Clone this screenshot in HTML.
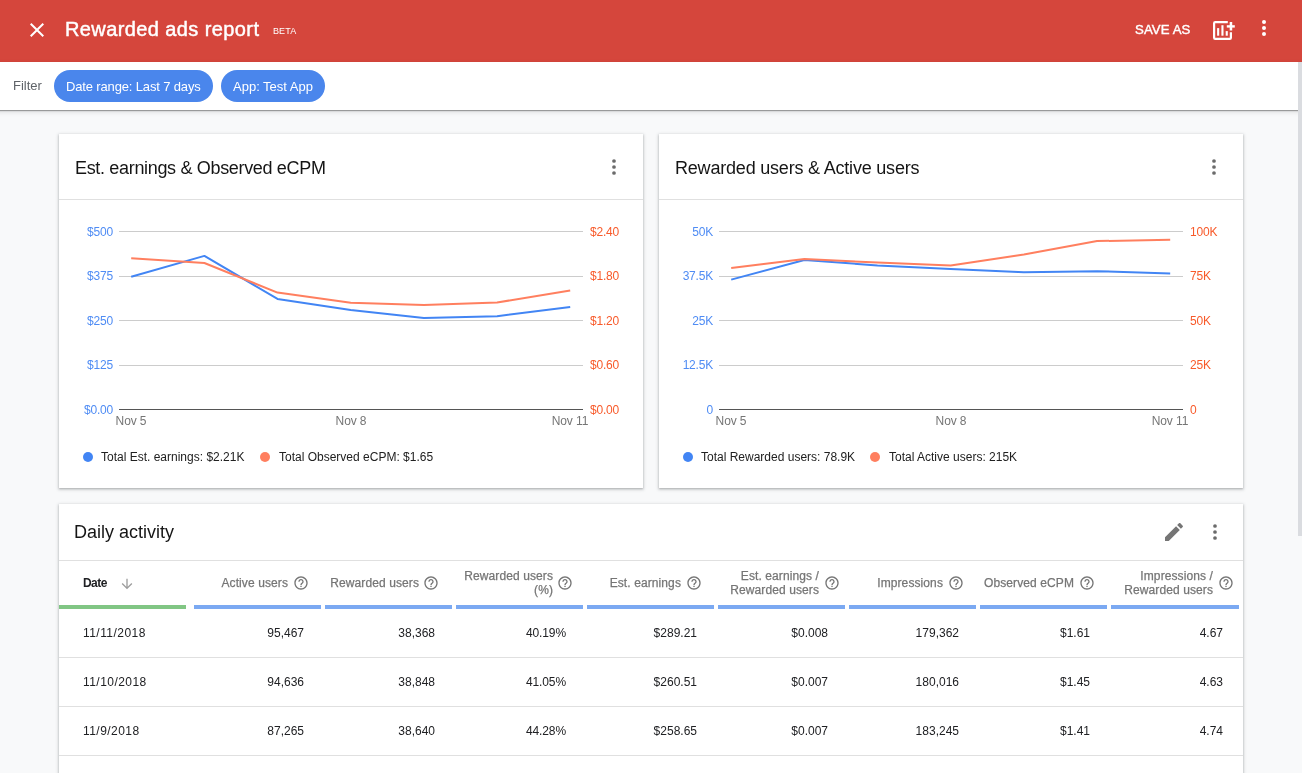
<!DOCTYPE html>
<html><head><meta charset="utf-8"><title>Rewarded ads report</title>
<style>
html,body{-webkit-font-smoothing:antialiased;margin:0;padding:0;width:1302px;height:773px;overflow:hidden;background:#f8f9fa;font-family:"Liberation Sans",sans-serif;}
.a{position:absolute;}
.t{position:absolute;white-space:nowrap;will-change:transform;}
.card{background:#fff;box-shadow:0 1px 2px rgba(60,64,67,.30),0 1px 3px 1px rgba(60,64,67,.15);}
</style></head><body>
<div class="a" style="left:0;top:0;width:1302px;height:62px;background:#d5463c"></div>
<svg class="a" style="left:25px;top:18px" width="24" height="24" viewBox="0 0 24 24"><path fill="#fff" d="M19 6.41L17.59 5 12 10.59 6.41 5 5 6.41 10.59 12 5 17.59 6.41 19 12 13.41 17.59 19 19 17.59 13.41 12z"/></svg>
<div class="t" style="top:17.07px;font-size:20px;line-height:24px;color:#fff;letter-spacing:0.4px;left:64.8px;-webkit-text-stroke:0.45px #fff;">Rewarded ads report</div>
<div class="t" style="top:26.18px;font-size:9px;line-height:11px;color:#fff;letter-spacing:0.1px;left:272.8px;">BETA</div>
<div class="t" style="top:22.13px;font-size:13.2px;line-height:16px;color:#fff;letter-spacing:0.1px;left:1135.2px;-webkit-text-stroke:0.4px #fff;">SAVE AS</div>
<svg class="a" style="left:1210px;top:18px" width="28" height="26" viewBox="0 0 28 26"><path d="M17.8 4.1 H5.2 Q4.1 4.1 4.1 5.2 V19.8 Q4.1 20.9 5.2 20.9 H19.8 Q20.9 20.9 20.9 19.8 V14.2" fill="none" stroke="#fff" stroke-width="2.2"/><rect x="7.1" y="10.1" width="2.1" height="7.6" fill="#fff"/><rect x="11.4" y="7.2" width="2.1" height="10.5" fill="#fff"/><rect x="15.7" y="13.1" width="2.1" height="4.6" fill="#fff"/><rect x="16.8" y="7.2" width="8" height="2.4" fill="#fff"/><rect x="19.7" y="4" width="2.5" height="8.5" fill="#fff"/></svg>
<svg class="a" style="left:1252px;top:16px" width="24" height="24" viewBox="0 0 24 24"><circle cx="12" cy="6" r="2" fill="#fff"/><circle cx="12" cy="12" r="2" fill="#fff"/><circle cx="12" cy="18" r="2" fill="#fff"/></svg>
<div class="a" style="left:-20px;top:62px;width:1342px;height:48px;background:#fff;box-shadow:0 1px 1px rgba(0,0,0,.32),0 2px 5px rgba(0,0,0,.12)"></div>
<div class="t" style="top:77.80px;font-size:13px;line-height:16px;color:#5f6368;left:12.9px;">Filter</div>
<div class="a" style="left:54px;top:70px;width:159px;height:32px;border-radius:16px;background:#4a86ec"></div>
<div class="t" style="top:78.60px;font-size:13px;line-height:16px;color:#fff;letter-spacing:-0.15px;left:66.3px;">Date range: Last 7 days</div>
<div class="a" style="left:221px;top:70px;width:104px;height:32px;border-radius:16px;background:#4a86ec"></div>
<div class="t" style="top:78.60px;font-size:13px;line-height:16px;color:#fff;left:233.1px;">App: Test App</div>
<div class="a card" style="left:59px;top:134px;width:584px;height:354px"></div>
<div class="a card" style="left:659px;top:134px;width:584px;height:354px"></div>
<div class="a card" style="left:59px;top:504px;width:1184px;height:400px"></div>
<div class="t" style="top:156.76px;font-size:18px;line-height:22px;color:#151515;letter-spacing:-0.33px;left:74.8px;">Est. earnings &amp; Observed eCPM</div>
<div class="a" style="left:59px;top:199px;width:584px;height:1px;background:#e0e0e0"></div>
<svg class="a" style="left:602.4px;top:155px" width="24" height="24" viewBox="0 0 24 24"><circle cx="12" cy="6" r="1.85" fill="#6b6b6b"/><circle cx="12" cy="12" r="1.85" fill="#6b6b6b"/><circle cx="12" cy="18" r="1.85" fill="#6b6b6b"/></svg>
<svg class="a" style="left:0px;top:0" width="660" height="500"><rect x="119" y="231" width="464" height="1" fill="#ccc"/><rect x="119" y="276" width="464" height="1" fill="#ccc"/><rect x="119" y="320" width="464" height="1" fill="#ccc"/><rect x="119" y="365" width="464" height="1" fill="#ccc"/><rect x="119" y="409" width="464" height="1" fill="#555"/><polyline points="131.2,276.7 204.4,255.9 277.5,298.9 350.7,309.9 423.9,317.9 497.1,316.2 570.2,306.9" fill="none" stroke="#4285f4" stroke-width="2" stroke-linejoin="round"/><polyline points="131.2,258.3 204.4,263.0 277.5,292.6 350.7,302.7 423.9,305.0 497.1,302.5 570.2,290.4" fill="none" stroke="#ff7f5f" stroke-width="2" stroke-linejoin="round"/></svg>
<div class="t" style="top:224.64px;font-size:12px;line-height:14px;color:#4f8cf4;letter-spacing:-0.2px;left:-887.4px;width:1000px;text-align:right;">$500</div>
<div class="t" style="top:268.64px;font-size:12px;line-height:14px;color:#4f8cf4;letter-spacing:-0.2px;left:-887.4px;width:1000px;text-align:right;">$375</div>
<div class="t" style="top:313.64px;font-size:12px;line-height:14px;color:#4f8cf4;letter-spacing:-0.2px;left:-887.4px;width:1000px;text-align:right;">$250</div>
<div class="t" style="top:357.64px;font-size:12px;line-height:14px;color:#4f8cf4;letter-spacing:-0.2px;left:-887.4px;width:1000px;text-align:right;">$125</div>
<div class="t" style="top:402.64px;font-size:12px;line-height:14px;color:#4f8cf4;letter-spacing:-0.2px;left:-887.4px;width:1000px;text-align:right;">$0.00</div>
<div class="t" style="top:224.64px;font-size:12px;line-height:14px;color:#f85a2a;letter-spacing:-0.2px;left:589.5px;">$2.40</div>
<div class="t" style="top:268.64px;font-size:12px;line-height:14px;color:#f85a2a;letter-spacing:-0.2px;left:589.5px;">$1.80</div>
<div class="t" style="top:313.64px;font-size:12px;line-height:14px;color:#f85a2a;letter-spacing:-0.2px;left:589.5px;">$1.20</div>
<div class="t" style="top:357.64px;font-size:12px;line-height:14px;color:#f85a2a;letter-spacing:-0.2px;left:589.5px;">$0.60</div>
<div class="t" style="top:402.64px;font-size:12px;line-height:14px;color:#f85a2a;letter-spacing:-0.2px;left:589.5px;">$0.00</div>
<div class="t" style="top:413.74px;font-size:12px;line-height:14px;color:#757575;letter-spacing:-0.1px;left:-368.8px;width:1000px;text-align:center;">Nov 5</div>
<div class="t" style="top:413.74px;font-size:12px;line-height:14px;color:#757575;letter-spacing:-0.1px;left:-149.29000000000002px;width:1000px;text-align:center;">Nov 8</div>
<div class="t" style="top:413.74px;font-size:12px;line-height:14px;color:#757575;letter-spacing:-0.1px;left:70.22000000000003px;width:1000px;text-align:center;">Nov 11</div>
<div class="a" style="left:83px;top:452px;width:10px;height:10px;border-radius:50%;background:#4285f4"></div>
<div class="t" style="top:449.64px;font-size:12px;line-height:14px;color:#212121;left:101.3px;">Total Est. earnings: $2.21K</div>
<div class="a" style="left:260px;top:452px;width:10px;height:10px;border-radius:50%;background:#ff7f5f"></div>
<div class="t" style="top:449.64px;font-size:12px;line-height:14px;color:#212121;left:278.5px;">Total Observed eCPM: $1.65</div>
<div class="t" style="top:156.76px;font-size:18px;line-height:22px;color:#151515;letter-spacing:-0.2px;left:674.8px;">Rewarded users &amp; Active users</div>
<div class="a" style="left:659px;top:199px;width:584px;height:1px;background:#e0e0e0"></div>
<svg class="a" style="left:1202.4px;top:155px" width="24" height="24" viewBox="0 0 24 24"><circle cx="12" cy="6" r="1.85" fill="#6b6b6b"/><circle cx="12" cy="12" r="1.85" fill="#6b6b6b"/><circle cx="12" cy="18" r="1.85" fill="#6b6b6b"/></svg>
<svg class="a" style="left:600px;top:0" width="660" height="500"><rect x="119" y="231" width="464" height="1" fill="#ccc"/><rect x="119" y="276" width="464" height="1" fill="#ccc"/><rect x="119" y="320" width="464" height="1" fill="#ccc"/><rect x="119" y="365" width="464" height="1" fill="#ccc"/><rect x="119" y="409" width="464" height="1" fill="#555"/><polyline points="131.2,279.6 204.4,260.0 277.5,265.4 350.7,269.1 423.9,272.3 497.1,271.2 570.2,273.4" fill="none" stroke="#4285f4" stroke-width="2" stroke-linejoin="round"/><polyline points="131.2,267.9 204.4,258.9 277.5,262.6 350.7,265.4 423.9,254.5 497.1,241.1 570.2,239.8" fill="none" stroke="#ff7f5f" stroke-width="2" stroke-linejoin="round"/></svg>
<div class="t" style="top:224.64px;font-size:12px;line-height:14px;color:#4f8cf4;letter-spacing:-0.2px;left:-287.4px;width:1000px;text-align:right;">50K</div>
<div class="t" style="top:268.64px;font-size:12px;line-height:14px;color:#4f8cf4;letter-spacing:-0.2px;left:-287.4px;width:1000px;text-align:right;">37.5K</div>
<div class="t" style="top:313.64px;font-size:12px;line-height:14px;color:#4f8cf4;letter-spacing:-0.2px;left:-287.4px;width:1000px;text-align:right;">25K</div>
<div class="t" style="top:357.64px;font-size:12px;line-height:14px;color:#4f8cf4;letter-spacing:-0.2px;left:-287.4px;width:1000px;text-align:right;">12.5K</div>
<div class="t" style="top:402.64px;font-size:12px;line-height:14px;color:#4f8cf4;letter-spacing:-0.2px;left:-287.4px;width:1000px;text-align:right;">0</div>
<div class="t" style="top:224.64px;font-size:12px;line-height:14px;color:#f85a2a;letter-spacing:-0.2px;left:1189.5px;">100K</div>
<div class="t" style="top:268.64px;font-size:12px;line-height:14px;color:#f85a2a;letter-spacing:-0.2px;left:1189.5px;">75K</div>
<div class="t" style="top:313.64px;font-size:12px;line-height:14px;color:#f85a2a;letter-spacing:-0.2px;left:1189.5px;">50K</div>
<div class="t" style="top:357.64px;font-size:12px;line-height:14px;color:#f85a2a;letter-spacing:-0.2px;left:1189.5px;">25K</div>
<div class="t" style="top:402.64px;font-size:12px;line-height:14px;color:#f85a2a;letter-spacing:-0.2px;left:1189.5px;">0</div>
<div class="t" style="top:413.74px;font-size:12px;line-height:14px;color:#757575;letter-spacing:-0.1px;left:231.20000000000005px;width:1000px;text-align:center;">Nov 5</div>
<div class="t" style="top:413.74px;font-size:12px;line-height:14px;color:#757575;letter-spacing:-0.1px;left:450.71000000000004px;width:1000px;text-align:center;">Nov 8</div>
<div class="t" style="top:413.74px;font-size:12px;line-height:14px;color:#757575;letter-spacing:-0.1px;left:670.22px;width:1000px;text-align:center;">Nov 11</div>
<div class="a" style="left:683px;top:452px;width:10px;height:10px;border-radius:50%;background:#4285f4"></div>
<div class="t" style="top:449.64px;font-size:12px;line-height:14px;color:#212121;left:701.3px;">Total Rewarded users: 78.9K</div>
<div class="a" style="left:870px;top:452px;width:10px;height:10px;border-radius:50%;background:#ff7f5f"></div>
<div class="t" style="top:449.64px;font-size:12px;line-height:14px;color:#212121;left:888.5px;">Total Active users: 215K</div>
<div class="t" style="top:521.46px;font-size:18px;line-height:22px;color:#151515;left:74.4px;">Daily activity</div>
<div class="a" style="left:59px;top:560px;width:1184px;height:1px;background:#e0e0e0"></div>
<svg class="a" style="left:1162.3px;top:520px" width="24" height="24" viewBox="0 0 24 24"><path fill="#757575" d="M3 17.25V21h3.75L17.81 9.94l-3.75-3.75L3 17.25zM20.71 7.04c.39-.39.39-1.02 0-1.41l-2.34-2.34c-.39-.39-1.02-.39-1.41 0l-1.83 1.83 3.75 3.75 1.83-1.83z"/></svg>
<svg class="a" style="left:1202.5px;top:520px" width="24" height="24" viewBox="0 0 24 24"><circle cx="12" cy="6" r="1.85" fill="#6b6b6b"/><circle cx="12" cy="12" r="1.85" fill="#6b6b6b"/><circle cx="12" cy="18" r="1.85" fill="#6b6b6b"/></svg>
<div class="t" style="top:575.74px;font-size:12px;line-height:14px;color:#202124;font-weight:700;letter-spacing:-0.55px;left:83.4px;">Date</div>
<svg class="a" style="left:119px;top:576px" width="16" height="16" viewBox="0 0 24 24"><path fill="#9e9e9e" d="M20 12l-1.41-1.41L13 16.17V4h-2v12.17l-5.58-5.59L4 12l8 8 8-8z"/></svg>
<div class="a" style="left:59px;top:605px;width:127px;height:4px;background:#81c684"></div>
<div class="a" style="left:194px;top:605px;width:127px;height:4px;background:#7ba9f2"></div>
<div class="a" style="left:325px;top:605px;width:127px;height:4px;background:#7ba9f2"></div>
<div class="a" style="left:456px;top:605px;width:127px;height:4px;background:#7ba9f2"></div>
<div class="a" style="left:587px;top:605px;width:127px;height:4px;background:#7ba9f2"></div>
<div class="a" style="left:718px;top:605px;width:127px;height:4px;background:#7ba9f2"></div>
<div class="a" style="left:849px;top:605px;width:127px;height:4px;background:#7ba9f2"></div>
<div class="a" style="left:980px;top:605px;width:127px;height:4px;background:#7ba9f2"></div>
<div class="a" style="left:1111px;top:605px;width:128px;height:4px;background:#7ba9f2"></div>
<svg class="a" style="left:292.5px;top:575px" width="16" height="16" viewBox="0 0 24 24"><path fill="#757575" d="M11 18h2v-2h-2v2zm1-16C6.48 2 2 6.48 2 12s4.48 10 10 10 10-4.48 10-10S17.52 2 12 2zm0 18c-4.41 0-8-3.59-8-8s3.59-8 8-8 8 3.59 8 8-3.59 8-8 8zm0-14c-2.21 0-4 1.79-4 4h2c0-1.1.9-2 2-2s2 .9 2 2c0 2-3 1.75-3 5h2c0-2.25 3-2.5 3-5 0-2.21-1.79-4-4-4z"/></svg>
<div class="t" style="top:575.74px;font-size:12px;line-height:14px;color:#757575;letter-spacing:0.1px;left:-711.9px;width:1000px;text-align:right;-webkit-text-stroke:0.25px #757575;">Active users</div>
<svg class="a" style="left:423.3px;top:575px" width="16" height="16" viewBox="0 0 24 24"><path fill="#757575" d="M11 18h2v-2h-2v2zm1-16C6.48 2 2 6.48 2 12s4.48 10 10 10 10-4.48 10-10S17.52 2 12 2zm0 18c-4.41 0-8-3.59-8-8s3.59-8 8-8 8 3.59 8 8-3.59 8-8 8zm0-14c-2.21 0-4 1.79-4 4h2c0-1.1.9-2 2-2s2 .9 2 2c0 2-3 1.75-3 5h2c0-2.25 3-2.5 3-5 0-2.21-1.79-4-4-4z"/></svg>
<div class="t" style="top:575.74px;font-size:12px;line-height:14px;color:#757575;letter-spacing:0.1px;left:-581.0999999999999px;width:1000px;text-align:right;-webkit-text-stroke:0.25px #757575;">Rewarded users</div>
<svg class="a" style="left:557px;top:575px" width="16" height="16" viewBox="0 0 24 24"><path fill="#757575" d="M11 18h2v-2h-2v2zm1-16C6.48 2 2 6.48 2 12s4.48 10 10 10 10-4.48 10-10S17.52 2 12 2zm0 18c-4.41 0-8-3.59-8-8s3.59-8 8-8 8 3.59 8 8-3.59 8-8 8zm0-14c-2.21 0-4 1.79-4 4h2c0-1.1.9-2 2-2s2 .9 2 2c0 2-3 1.75-3 5h2c0-2.25 3-2.5 3-5 0-2.21-1.79-4-4-4z"/></svg>
<div class="t" style="top:568.64px;font-size:12px;line-height:14px;color:#757575;letter-spacing:0.1px;left:-447.4px;width:1000px;text-align:right;-webkit-text-stroke:0.25px #757575;">Rewarded users</div>
<div class="t" style="top:582.64px;font-size:12px;line-height:14px;color:#757575;letter-spacing:0.1px;left:-447.4px;width:1000px;text-align:right;-webkit-text-stroke:0.25px #757575;">(%)</div>
<svg class="a" style="left:685.6px;top:575px" width="16" height="16" viewBox="0 0 24 24"><path fill="#757575" d="M11 18h2v-2h-2v2zm1-16C6.48 2 2 6.48 2 12s4.48 10 10 10 10-4.48 10-10S17.52 2 12 2zm0 18c-4.41 0-8-3.59-8-8s3.59-8 8-8 8 3.59 8 8-3.59 8-8 8zm0-14c-2.21 0-4 1.79-4 4h2c0-1.1.9-2 2-2s2 .9 2 2c0 2-3 1.75-3 5h2c0-2.25 3-2.5 3-5 0-2.21-1.79-4-4-4z"/></svg>
<div class="t" style="top:575.74px;font-size:12px;line-height:14px;color:#757575;letter-spacing:0.1px;left:-318.79999999999995px;width:1000px;text-align:right;-webkit-text-stroke:0.25px #757575;">Est. earnings</div>
<svg class="a" style="left:823.7px;top:575px" width="16" height="16" viewBox="0 0 24 24"><path fill="#757575" d="M11 18h2v-2h-2v2zm1-16C6.48 2 2 6.48 2 12s4.48 10 10 10 10-4.48 10-10S17.52 2 12 2zm0 18c-4.41 0-8-3.59-8-8s3.59-8 8-8 8 3.59 8 8-3.59 8-8 8zm0-14c-2.21 0-4 1.79-4 4h2c0-1.1.9-2 2-2s2 .9 2 2c0 2-3 1.75-3 5h2c0-2.25 3-2.5 3-5 0-2.21-1.79-4-4-4z"/></svg>
<div class="t" style="top:568.64px;font-size:12px;line-height:14px;color:#757575;letter-spacing:0.1px;left:-180.69999999999993px;width:1000px;text-align:right;-webkit-text-stroke:0.25px #757575;">Est. earnings /</div>
<div class="t" style="top:582.64px;font-size:12px;line-height:14px;color:#757575;letter-spacing:0.1px;left:-180.69999999999993px;width:1000px;text-align:right;-webkit-text-stroke:0.25px #757575;">Rewarded users</div>
<svg class="a" style="left:947.6px;top:575px" width="16" height="16" viewBox="0 0 24 24"><path fill="#757575" d="M11 18h2v-2h-2v2zm1-16C6.48 2 2 6.48 2 12s4.48 10 10 10 10-4.48 10-10S17.52 2 12 2zm0 18c-4.41 0-8-3.59-8-8s3.59-8 8-8 8 3.59 8 8-3.59 8-8 8zm0-14c-2.21 0-4 1.79-4 4h2c0-1.1.9-2 2-2s2 .9 2 2c0 2-3 1.75-3 5h2c0-2.25 3-2.5 3-5 0-2.21-1.79-4-4-4z"/></svg>
<div class="t" style="top:575.74px;font-size:12px;line-height:14px;color:#757575;letter-spacing:0.1px;left:-56.799999999999955px;width:1000px;text-align:right;-webkit-text-stroke:0.25px #757575;">Impressions</div>
<svg class="a" style="left:1078.5px;top:575px" width="16" height="16" viewBox="0 0 24 24"><path fill="#757575" d="M11 18h2v-2h-2v2zm1-16C6.48 2 2 6.48 2 12s4.48 10 10 10 10-4.48 10-10S17.52 2 12 2zm0 18c-4.41 0-8-3.59-8-8s3.59-8 8-8 8 3.59 8 8-3.59 8-8 8zm0-14c-2.21 0-4 1.79-4 4h2c0-1.1.9-2 2-2s2 .9 2 2c0 2-3 1.75-3 5h2c0-2.25 3-2.5 3-5 0-2.21-1.79-4-4-4z"/></svg>
<div class="t" style="top:575.74px;font-size:12px;line-height:14px;color:#757575;letter-spacing:0.1px;left:74.09999999999991px;width:1000px;text-align:right;-webkit-text-stroke:0.25px #757575;">Observed eCPM</div>
<svg class="a" style="left:1217.5px;top:575px" width="16" height="16" viewBox="0 0 24 24"><path fill="#757575" d="M11 18h2v-2h-2v2zm1-16C6.48 2 2 6.48 2 12s4.48 10 10 10 10-4.48 10-10S17.52 2 12 2zm0 18c-4.41 0-8-3.59-8-8s3.59-8 8-8 8 3.59 8 8-3.59 8-8 8zm0-14c-2.21 0-4 1.79-4 4h2c0-1.1.9-2 2-2s2 .9 2 2c0 2-3 1.75-3 5h2c0-2.25 3-2.5 3-5 0-2.21-1.79-4-4-4z"/></svg>
<div class="t" style="top:568.64px;font-size:12px;line-height:14px;color:#757575;letter-spacing:0.1px;left:213.0999999999999px;width:1000px;text-align:right;-webkit-text-stroke:0.25px #757575;">Impressions /</div>
<div class="t" style="top:582.64px;font-size:12px;line-height:14px;color:#757575;letter-spacing:0.1px;left:213.0999999999999px;width:1000px;text-align:right;-webkit-text-stroke:0.25px #757575;">Rewarded users</div>
<div class="t" style="top:625.84px;font-size:12px;line-height:14px;color:#202124;letter-spacing:0.45px;left:83px;">11/11/2018</div>
<div class="t" style="top:625.84px;font-size:12px;line-height:14px;color:#202124;left:-696px;width:1000px;text-align:right;">95,467</div>
<div class="t" style="top:625.84px;font-size:12px;line-height:14px;color:#202124;left:-565px;width:1000px;text-align:right;">38,368</div>
<div class="t" style="top:625.84px;font-size:12px;line-height:14px;color:#202124;letter-spacing:-0.1px;left:-434px;width:1000px;text-align:right;">40.19%</div>
<div class="t" style="top:625.84px;font-size:12px;line-height:14px;color:#202124;left:-303px;width:1000px;text-align:right;">$289.21</div>
<div class="t" style="top:625.84px;font-size:12px;line-height:14px;color:#202124;left:-172px;width:1000px;text-align:right;">$0.008</div>
<div class="t" style="top:625.84px;font-size:12px;line-height:14px;color:#202124;left:-41px;width:1000px;text-align:right;">179,362</div>
<div class="t" style="top:625.84px;font-size:12px;line-height:14px;color:#202124;left:90px;width:1000px;text-align:right;">$1.61</div>
<div class="t" style="top:625.84px;font-size:12px;line-height:14px;color:#202124;left:222.5px;width:1000px;text-align:right;">4.67</div>
<div class="a" style="left:59px;top:657px;width:1184px;height:1px;background:#e0e0e0"></div>
<div class="t" style="top:674.84px;font-size:12px;line-height:14px;color:#202124;letter-spacing:0.45px;left:83px;">11/10/2018</div>
<div class="t" style="top:674.84px;font-size:12px;line-height:14px;color:#202124;left:-696px;width:1000px;text-align:right;">94,636</div>
<div class="t" style="top:674.84px;font-size:12px;line-height:14px;color:#202124;left:-565px;width:1000px;text-align:right;">38,848</div>
<div class="t" style="top:674.84px;font-size:12px;line-height:14px;color:#202124;letter-spacing:-0.1px;left:-434px;width:1000px;text-align:right;">41.05%</div>
<div class="t" style="top:674.84px;font-size:12px;line-height:14px;color:#202124;left:-303px;width:1000px;text-align:right;">$260.51</div>
<div class="t" style="top:674.84px;font-size:12px;line-height:14px;color:#202124;left:-172px;width:1000px;text-align:right;">$0.007</div>
<div class="t" style="top:674.84px;font-size:12px;line-height:14px;color:#202124;left:-41px;width:1000px;text-align:right;">180,016</div>
<div class="t" style="top:674.84px;font-size:12px;line-height:14px;color:#202124;left:90px;width:1000px;text-align:right;">$1.45</div>
<div class="t" style="top:674.84px;font-size:12px;line-height:14px;color:#202124;left:222.5px;width:1000px;text-align:right;">4.63</div>
<div class="a" style="left:59px;top:706px;width:1184px;height:1px;background:#e0e0e0"></div>
<div class="t" style="top:723.84px;font-size:12px;line-height:14px;color:#202124;letter-spacing:0.45px;left:83px;">11/9/2018</div>
<div class="t" style="top:723.84px;font-size:12px;line-height:14px;color:#202124;left:-696px;width:1000px;text-align:right;">87,265</div>
<div class="t" style="top:723.84px;font-size:12px;line-height:14px;color:#202124;left:-565px;width:1000px;text-align:right;">38,640</div>
<div class="t" style="top:723.84px;font-size:12px;line-height:14px;color:#202124;letter-spacing:-0.1px;left:-434px;width:1000px;text-align:right;">44.28%</div>
<div class="t" style="top:723.84px;font-size:12px;line-height:14px;color:#202124;left:-303px;width:1000px;text-align:right;">$258.65</div>
<div class="t" style="top:723.84px;font-size:12px;line-height:14px;color:#202124;left:-172px;width:1000px;text-align:right;">$0.007</div>
<div class="t" style="top:723.84px;font-size:12px;line-height:14px;color:#202124;left:-41px;width:1000px;text-align:right;">183,245</div>
<div class="t" style="top:723.84px;font-size:12px;line-height:14px;color:#202124;left:90px;width:1000px;text-align:right;">$1.41</div>
<div class="t" style="top:723.84px;font-size:12px;line-height:14px;color:#202124;left:222.5px;width:1000px;text-align:right;">4.74</div>
<div class="a" style="left:59px;top:755px;width:1184px;height:1px;background:#e0e0e0"></div>
<div class="a" style="left:1298px;top:62px;width:4px;height:474px;background:#dadce0"></div>
</body></html>
